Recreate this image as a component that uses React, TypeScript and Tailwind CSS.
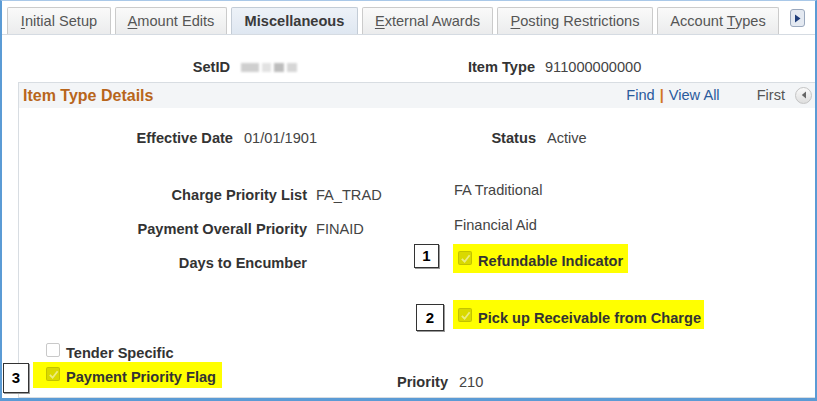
import React from 'react';

const tabs = [
  { pre: '', key: 'I', rest: 'nitial Setup', w: 'w-[104px]' },
  { pre: '', key: 'A', rest: 'mount Edits', w: 'w-[112px]' },
  { pre: 'Miscellaneous', key: '', rest: '', w: 'w-[127px]', active: true },
  { pre: '', key: 'E', rest: 'xternal Awards', w: 'w-[131px]' },
  { pre: '', key: 'P', rest: 'osting Restrictions', w: 'w-[156px]' },
  { pre: 'Account ', key: 'T', rest: 'ypes', w: 'w-[122px]' },
];

function CheckBox({ checked }: { checked?: boolean }) {
  if (!checked) {
    return <span className="block w-[14px] h-[14px] rounded-[2px] border border-[#c9c9c9] bg-white" />;
  }
  return (
    <span className="flex items-center justify-center w-[14px] h-[14px] rounded-[2px] border border-black/10 bg-black/15">
      <svg width="11" height="11" viewBox="0 0 12 12">
        <path d="M2 6.5 L5 9.5 L10.5 2.5" fill="none" stroke="rgba(255,255,255,0.5)" strokeWidth="2" />
      </svg>
    </span>
  );
}

function Marker({ n, className }: { n: string; className: string }) {
  return (
    <div className={`absolute flex items-center justify-center border border-[#333] bg-white font-bold text-[15px] text-black shadow-[1px_1px_0_#999] ${className}`}>
      {n}
    </div>
  );
}

export default function App() {
  return (
    <div className="w-[817px] h-[401px] overflow-hidden bg-white border-l-2 border-r-2 border-t border-b-[3px] border-l-[#5b9bd5] border-r-[#5b9bd5] border-t-[#a9c8e8] border-b-[#5b9bd5] font-['Liberation_Sans',Arial,sans-serif] text-[14.6px] text-[#444]">
      {/* Tabs */}
      <div className="flex items-end pt-[6px] pl-[5px] pr-[8px] border-b border-[#d5dbe2]">
        <div className="flex gap-[4px]">
          {tabs.map((t, i) => (
            <div
              key={i}
              className={`${t.w} h-[27px] pt-[1px] flex items-center justify-center border border-b-0 rounded-t-[2px] ${
                t.active
                  ? 'bg-gradient-to-b from-[#edf2f8] to-[#dfe7f1] border-[#c3ccd6] font-bold text-[#3a3a3a]'
                  : 'bg-gradient-to-b from-[#fafafa] to-[#ebeced] border-[#cbcbcb] text-[#555]'
              }`}
            >
              <span className="whitespace-pre">
                {t.pre}
                {t.key && <span className="underline underline-offset-2">{t.key}</span>}
                {t.rest}
              </span>
            </div>
          ))}
        </div>
        <div className="ml-[11px] mb-[7px] w-[15px] h-[18px] rounded-[3px] border border-[#9aa8bd] bg-[#e4e9f1] flex items-center justify-center">
          <svg width="7" height="9" viewBox="0 0 7 9">
            <path d="M1 0.5 L6.5 4.5 L1 8.5 Z" fill="#1f3d7a" />
          </svg>
        </div>
      </div>

      {/* SetID / Item Type */}
      <div className="flex mt-[23px] h-[18px] leading-[18px]">
        <div className="w-[228px] text-right font-bold text-[#333]">SetID</div>
        <div className="ml-[11px] w-[200px] flex items-center gap-[3px] blur-[1px]">
          <span className="w-[18px] h-[9px] bg-[#cfcfcf]" />
          <span className="w-[9px] h-[9px] bg-[#e2e2e2]" />
          <span className="w-[10px] h-[9px] bg-[#bdbdbd]" />
          <span className="w-[10px] h-[9px] bg-[#d6d6d6]" />
        </div>
        <div className="w-[94px] text-right font-bold text-[#333]">Item Type</div>
        <div className="ml-[10px]">911000000000</div>
      </div>

      {/* Item Type Details */}
      <div className="ml-[16px] mt-[6px] border-t border-l border-b border-[#d8dde2] pb-[6px]">
        <div className="h-[25px] bg-[#f3f5f7] flex items-center justify-between pl-[4px] pr-[3px]">
          <div className="font-bold text-[16px] text-[#b8651b]">Item Type Details</div>
          <div className="flex items-center">
            <span className="text-[#2a5a9c]">Find</span>
            <span className="mx-[5px] text-[#d2771f] font-bold">|</span>
            <span className="text-[#2a5a9c]">View All</span>
            <span className="ml-[37px] text-[#555]">First</span>
            <span className="ml-[10px] w-[17px] h-[17px] rounded-full border border-[#c4c4c4] bg-gradient-to-b from-[#fafafa] to-[#dedede] flex items-center justify-center">
              <svg width="6" height="8" viewBox="0 0 6 8">
                <path d="M5 0.5 L0.8 4 L5 7.5 Z" fill="#666" />
              </svg>
            </span>
          </div>
        </div>

        <div className="flex mt-[21px] h-[18px] leading-[18px]">
          <div className="w-[214px] text-right font-bold text-[#333]">Effective Date</div>
          <div className="ml-[11px] w-[200px]">01/01/1901</div>
          <div className="w-[92px] text-right font-bold text-[#333]">Status</div>
          <div className="ml-[11px]">Active</div>
        </div>

        <div className="flex mt-[34px] leading-[18px]">
          <div className="w-[434px] pt-[5px] flex flex-col gap-[16px]">
            <div className="flex h-[18px]">
              <div className="w-[288px] text-right font-bold text-[#333]">Charge Priority List</div>
              <div className="ml-[9px]">FA_TRAD</div>
            </div>
            <div className="flex h-[18px]">
              <div className="w-[288px] text-right font-bold text-[#333]">Payment Overall Priority</div>
              <div className="ml-[9px]">FINAID</div>
            </div>
            <div className="flex h-[18px]">
              <div className="w-[288px] text-right font-bold text-[#333]">Days to Encumber</div>
            </div>
          </div>
          <div className="flex flex-col items-start">
            <div className="pl-[1px] h-[18px]">FA Traditional</div>
            <div className="pl-[1px] h-[18px] mt-[17px]">Financial Aid</div>
            <div className="relative mt-[10px] h-[29px] bg-[#ffff00] flex items-start pt-[7px] pl-[5px] pr-[5px]">
              <Marker n="1" className="left-[-39px] top-0 w-[25px] h-[24px]" />
              <CheckBox checked />
              <span className="ml-[6px] mt-[1px] font-bold text-[#333]">Refundable Indicator</span>
            </div>
            <div className="relative mt-[27px] h-[29px] bg-[#ffff00] flex items-start pt-[8px] pl-[5px] pr-[3px]">
              <Marker n="2" className="left-[-37px] top-[4px] w-[28px] h-[27px]" />
              <CheckBox checked />
              <span className="ml-[6px] mt-[1px] font-bold text-[#333]">Pick up Receivable from Charge</span>
            </div>
          </div>
        </div>

        <div className="flex items-start mt-[14px] ml-[27px] leading-[18px]">
          <CheckBox />
          <span className="ml-[6px] mt-[1px] font-bold text-[#333]">Tender Specific</span>
        </div>

        <div className="flex items-start leading-[18px]">
          <div className="relative ml-[14px] w-[189px] h-[26px] bg-[#ffff00] flex items-start pt-[5px] pl-[13px]">
            <Marker n="3" className="left-[-30px] top-[1px] w-[26px] h-[30px]" />
            <CheckBox checked />
            <span className="ml-[6px] mt-[1px] font-bold text-[#333]">Payment Priority Flag</span>
          </div>
          <div className="mt-[11px] w-[226px] text-right font-bold text-[#333]">Priority</div>
          <div className="mt-[11px] ml-[11px]">210</div>
        </div>
      </div>
    </div>
  );
}
